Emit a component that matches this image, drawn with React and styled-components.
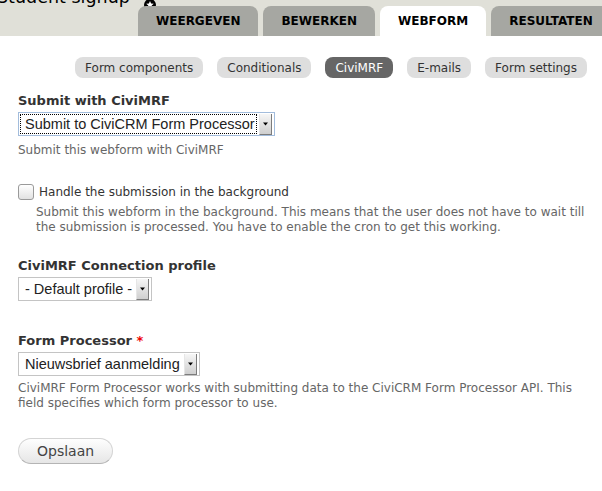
import styled, { createGlobalStyle } from "styled-components";

const GlobalStyle = createGlobalStyle`
  html, body {
    margin: 0;
    padding: 0;
    background: #fff;
    overflow: hidden;
  }
  body {
    font-family: "DejaVu Sans", "Noto Sans", sans-serif;
    font-size: 13px;
    color: #333;
  }
`;

const Header = styled.header`
  background: #e0e0d8;
  margin-top: -12px;
  overflow: hidden;
`;

const TitleRow = styled.div`
  display: flex;
  align-items: flex-end;
  height: 18px;
`;

const Title = styled.h1`
  margin: 0 0 0 -3px;
  font-size: 17.5px;
  font-weight: normal;
  line-height: 18px;
  color: #000;
  white-space: nowrap;
`;

const ShortcutIcon = styled.svg`
  margin-left: 14px;
  margin-bottom: -5px;
  flex: none;
`;

const PrimaryTabs = styled.ul`
  display: flex;
  gap: 5px;
  margin: 0;
  padding: 0 0 0 138px;
  list-style: none;
  white-space: nowrap;
`;

const PrimaryTab = styled.li`
  flex: none;
  height: 30px;
  line-height: 31px;
  padding: 0 18px;
  border-radius: 8px 8px 0 0;
  background: ${(p) => (p.$active ? "#fff" : "#a6a7a2")};
  color: #000;
  font-size: 12px;
  font-weight: bold;
  text-transform: uppercase;
`;

const Content = styled.main`
  padding: 0 6px 0 18px;
`;

const SecondaryTabs = styled.ul`
  display: flex;
  justify-content: flex-end;
  gap: 14px;
  margin: 21px 9px 0 0;
  padding: 0;
  list-style: none;
`;

const SecondaryTab = styled.li`
  height: 21px;
  line-height: 22px;
  padding: 0 10px;
  border-radius: 8px;
  font-size: 12px;
  background: ${(p) => (p.$active ? "#666" : "#dedede")};
  color: ${(p) => (p.$active ? "#fff" : "#333")};
`;

const FormItem = styled.div`
  margin-top: ${(p) => p.$top || 0}px;
`;

const Label = styled.label`
  display: block;
  font-weight: bold;
  line-height: 18px;
  margin-bottom: 2px;
  color: #333;
`;

const Required = styled.span`
  color: #e00;
`;

const SelectBox = styled.div`
  display: inline-flex;
  align-items: stretch;
  height: 22px;
  border: 1px solid ${(p) => (p.$focused ? "#a2bcdc" : "#c4c4c4")};
  background: #fff;
  padding-right: 2px;
`;

const SelectValue = styled.span`
  margin: 1px;
  padding: 0 2px 0 5px;
  outline: 1px dotted ${(p) => (p.$focused ? "#000" : "transparent")};
  outline-offset: -1px;
  font-family: "Liberation Sans", Arial, sans-serif;
  font-size: 14.5px;
  line-height: 20px;
  color: #222;
  white-space: nowrap;
`;

const SelectArrow = styled.span`
  display: flex;
  align-items: center;
  justify-content: center;
  width: 11px;
  margin: 1px 0 0 1px;
  background: linear-gradient(#f6f6f6, #cfcfcf);
  border-left: 1px solid #e6e6e6;
  border-right: 1px solid #7c7c7c;
  border-bottom: 1px solid #7c7c7c;
`;

const Description = styled.div`
  font-size: 12px;
  line-height: 15.5px;
  color: #666;
  margin-top: ${(p) => p.$top || 0}px;
  padding-left: ${(p) => p.$indent || 0}px;
`;

const CheckRow = styled.label`
  display: flex;
  align-items: center;
  gap: 5px;
  height: 18px;
  font-size: 12px;
  color: #333;
`;

const CheckBox = styled.span`
  width: 14px;
  height: 14px;
  border: 1px solid #9a9a9a;
  border-radius: 3px;
  background: linear-gradient(#ffffff, #e2e2e2);
  flex: none;
`;

const Actions = styled.div`
  margin-top: 26px;
`;

const Button = styled.button`
  height: 26px;
  padding: 0 18px;
  border: 1px solid #d4d4d4;
  border-bottom-color: #b4b4b4;
  border-radius: 20px;
  background: linear-gradient(#fefefe, #e6e6e6);
  font-family: "DejaVu Sans", sans-serif;
  font-size: 14px;
  color: #444;
`;

const Select = ({ value, focused }) => (
  <SelectBox $focused={focused}>
    <SelectValue $focused={focused}>{value}</SelectValue>
    <SelectArrow>
      <svg width="5" height="4" viewBox="0 0 5 4">
        <polygon points="0,0.5 5,0.5 2.5,3.5" fill="#000" />
      </svg>
    </SelectArrow>
  </SelectBox>
);

const primaryTabs = ["Weergeven", "Bewerken", "Webform", "Resultaten"];
const secondaryTabs = [
  "Form components",
  "Conditionals",
  "CiviMRF",
  "E-mails",
  "Form settings",
];

export default function App() {
  return (
    <>
      <GlobalStyle />
      <Header>
        <TitleRow>
          <Title>Student signup</Title>
          <ShortcutIcon width="12" height="12" viewBox="0 0 12 12">
            <circle cx="6" cy="6" r="6" fill="#000" />
            <polygon
              points="6,2 7.1,4.6 9.8,4.8 7.7,6.6 8.4,9.3 6,7.8 3.6,9.3 4.3,6.6 2.2,4.8 4.9,4.6"
              fill="#fff"
            />
          </ShortcutIcon>
        </TitleRow>
        <PrimaryTabs>
          {primaryTabs.map((t) => (
            <PrimaryTab key={t} $active={t === "Webform"}>
              {t}
            </PrimaryTab>
          ))}
        </PrimaryTabs>
      </Header>
      <Content>
        <SecondaryTabs>
          {secondaryTabs.map((t) => (
            <SecondaryTab key={t} $active={t === "CiviMRF"}>
              {t}
            </SecondaryTab>
          ))}
        </SecondaryTabs>

        <FormItem $top={14}>
          <Label>Submit with CiviMRF</Label>
          <Select value="Submit to CiviCRM Form Processor" focused />
          <Description $top={7}>Submit this webform with CiviMRF</Description>
        </FormItem>

        <FormItem $top={24}>
          <CheckRow>
            <CheckBox />
            Handle the submission in the background
          </CheckRow>
          <Description $top={4} $indent={18}>
            Submit this webform in the background. This means that the user
            does not have to wait till the submission is processed. You have to
            enable the cron to get this working.
          </Description>
        </FormItem>

        <FormItem $top={21}>
          <Label>CiviMRF Connection profile</Label>
          <Select value="- Default profile -" />
        </FormItem>

        <FormItem $top={31}>
          <Label>
            Form Processor <Required>*</Required>
          </Label>
          <Select value="Nieuwsbrief aanmelding" />
          <Description $top={5}>
            CiviMRF Form Processor works with submitting data to the CiviCRM
            Form Processor API. This field specifies which form processor to
            use.
          </Description>
        </FormItem>

        <Actions>
          <Button type="button">Opslaan</Button>
        </Actions>
      </Content>
    </>
  );
}
